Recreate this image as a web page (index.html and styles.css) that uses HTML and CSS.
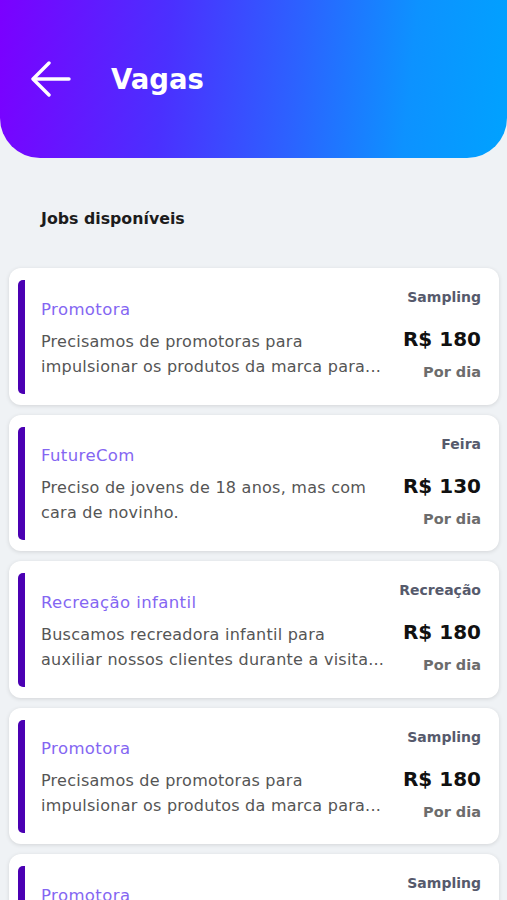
FILE: index.html
```html
<!DOCTYPE html>
<html lang="pt-BR">
<head>
    <meta charset="UTF-8">
    <meta name="viewport" content="width=device-width, initial-scale=1.0">
    <title>Vagas</title>
    <link rel="stylesheet" href="styles.css">
</head>
<body>
    <!-- Cabeçalho -->
    <header class="header">
        <button class="back-button" aria-label="Voltar">
            <svg width="40" height="36" viewBox="0 0 40 36" fill="none" stroke="#fff" stroke-width="3.4" stroke-linecap="round" stroke-linejoin="round">
                <path d="M38 18H3"/>
                <path d="M18 2L2 18l16 16"/>
            </svg>
        </button>
        <h1 class="page-title">Vagas</h1>
    </header>

    <main class="content">
        <h2 class="section-title">Jobs disponíveis</h2>

        <div class="job-list">
            <div class="job-card">
                <div class="job-bar"></div>
                <div class="job-info">
                    <h3 class="job-title">Promotora</h3>
                    <p class="job-desc">Precisamos de promotoras para<br>impulsionar os produtos da marca para...</p>
                </div>
                <div class="job-side">
                    <span class="job-tag">Sampling</span>
                    <span class="job-price">R$ 180</span>
                    <span class="job-period">Por dia</span>
                </div>
            </div>

            <div class="job-card">
                <div class="job-bar"></div>
                <div class="job-info">
                    <h3 class="job-title">FutureCom</h3>
                    <p class="job-desc">Preciso de jovens de 18 anos, mas com<br>cara de novinho.</p>
                </div>
                <div class="job-side">
                    <span class="job-tag">Feira</span>
                    <span class="job-price">R$ 130</span>
                    <span class="job-period">Por dia</span>
                </div>
            </div>

            <div class="job-card">
                <div class="job-bar"></div>
                <div class="job-info">
                    <h3 class="job-title">Recreação infantil</h3>
                    <p class="job-desc">Buscamos recreadora infantil para<br>auxiliar nossos clientes durante a visita...</p>
                </div>
                <div class="job-side">
                    <span class="job-tag">Recreação</span>
                    <span class="job-price">R$ 180</span>
                    <span class="job-period">Por dia</span>
                </div>
            </div>

            <div class="job-card">
                <div class="job-bar"></div>
                <div class="job-info">
                    <h3 class="job-title">Promotora</h3>
                    <p class="job-desc">Precisamos de promotoras para<br>impulsionar os produtos da marca para...</p>
                </div>
                <div class="job-side">
                    <span class="job-tag">Sampling</span>
                    <span class="job-price">R$ 180</span>
                    <span class="job-period">Por dia</span>
                </div>
            </div>

            <div class="job-card">
                <div class="job-bar"></div>
                <div class="job-info">
                    <h3 class="job-title">Promotora</h3>
                    <p class="job-desc">Precisamos de promotoras para<br>impulsionar os produtos da marca para...</p>
                </div>
                <div class="job-side">
                    <span class="job-tag">Sampling</span>
                    <span class="job-price">R$ 180</span>
                    <span class="job-period">Por dia</span>
                </div>
            </div>
        </div>
    </main>
</body>
</html>
```

FILE: styles.css
```css
body {
    font-family: "DejaVu Sans", "Noto Sans", sans-serif;
    margin: 0;
    padding: 0;
    background-color: #eff2f5;
    height: 900px;
    overflow: hidden;
}
.header {
    height: 158px;
    display: flex;
    align-items: center;
    padding: 0 0 0 31px;
    box-sizing: border-box;
    border-radius: 0 0 40px 40px;
    background: linear-gradient(96deg, #7b00ff 0%, #4b30ff 33%, #2c62ff 58%, #0d92ff 80%, #00a2ff 100%);
}
.back-button {
    background: none;
    border: none;
    padding: 0;
    width: 40px;
    height: 36px;
    cursor: pointer;
}
.back-button svg {
    display: block;
}
.page-title {
    margin: 0 0 0 40px;
    color: #fff;
    font-size: 27.5px;
    font-weight: 700;
}
.content {
    padding: 0 8px;
}
.section-title {
    margin: 0;
    padding: 51px 0 40px 33px;
    font-size: 15.8px;
    font-weight: 700;
    color: #1c1c1c;
}
.job-list {
    display: flex;
    flex-direction: column;
    gap: 10px;
    padding: 0 0 0 1px;
}
.job-card {
    display: flex;
    align-items: center;
    background-color: #fff;
    border-radius: 12px;
    box-shadow: 0 1px 4px rgba(0, 0, 0, 0.12);
    padding: 12px 18px 11px 9px;
    min-height: 136.5px;
    box-sizing: border-box;
}
.job-bar {
    align-self: stretch;
    width: 7px;
    background-color: #4b00b3;
    border-radius: 5px 0 0 5px;
}
.job-info {
    flex: 1;
    margin-left: 16px;
    padding-top: 5px;
    white-space: nowrap;
}
.job-title {
    margin: 0 0 10px;
    font-size: 16.5px;
    font-weight: 400;
    letter-spacing: 0.4px;
    color: #8466f2;
}
.job-desc {
    margin: 0;
    font-size: 16px;
    line-height: 25px;
    letter-spacing: 0.25px;
    color: #555;
}
.job-side {
    display: flex;
    flex-direction: column;
    align-items: flex-end;
    align-self: stretch;
    margin-left: auto;
    padding-top: 9px;
}
.job-tag {
    font-size: 14px;
    font-weight: 700;
    color: #565a6c;
}
.job-price {
    margin-top: 22px;
    font-size: 20px;
    font-weight: 700;
    color: #111;
}
.job-period {
    margin-top: 13px;
    font-size: 14.5px;
    font-weight: 700;
    color: #6c6c6c;
}
```
